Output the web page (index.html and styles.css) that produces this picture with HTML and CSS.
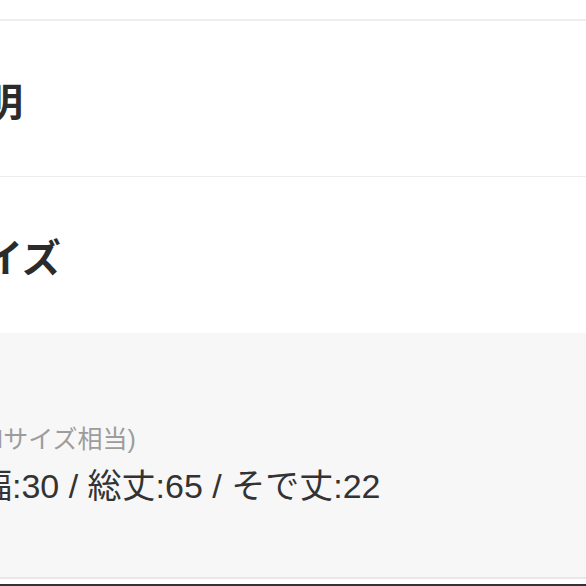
FILE: index.html
```html
<!DOCTYPE html>
<html lang="ja">
<head>
  <meta charset="UTF-8" />
  <meta name="viewport" content="width=device-width, initial-scale=1.0"/>
  <title>商品の説明</title>
  <link rel="stylesheet" href="styles.css">
</head>
<body>

<div class="page">
  <div class="top-strip"></div>

  <div class="section">
    <h2 class="label">説明</h2>
  </div>

  <div class="section">
    <h2 class="label">サイズ</h2>
  </div>

  <div class="detail">
    <p class="note">(Mサイズ相当)</p>
    <p class="size">身幅:30 / 総丈:65 / そで丈:22</p>
  </div>

  <div class="gap"></div>
  <div class="bottom-bar"></div>
</div>

</body>
</html>
```

FILE: styles.css
```css
body {
  margin: 0;
  background: #fff;
  font-family: "Liberation Sans", "Noto Sans CJK JP", sans-serif;
  color: #333;
  overflow: hidden;
}
.page {
  margin-left: -55px;
}
.top-strip {
  height: 19px;
  border-bottom: 2px solid #ededed;
}
.section {
  box-sizing: border-box;
  height: 156px;
  display: flex;
  align-items: center;
  border-bottom: 1px solid #ececec;
}
.section:nth-of-type(3) {
  border-bottom: none;
}
.label {
  margin: 0;
  font-family: "Noto Sans CJK JP", sans-serif;
  font-size: 39px;
  font-weight: bold;
  color: #2b2b2b;
}
.detail {
  box-sizing: border-box;
  background: #f7f7f7;
  height: 246px;
  padding-top: 1px;
  border-bottom: 2px solid #e8e8e8;
}
.note {
  margin: 89px 0 0 29px;
  font-size: 25px;
  line-height: 32px;
  color: #9c9c9c;
}
.size {
  margin: 11px 0 0 -1px;
  font-size: 34px;
  line-height: 40px;
  color: #333;
}
.gap {
  height: 5px;
}
.bottom-bar {
  height: 10px;
  background: #333;
}
```
